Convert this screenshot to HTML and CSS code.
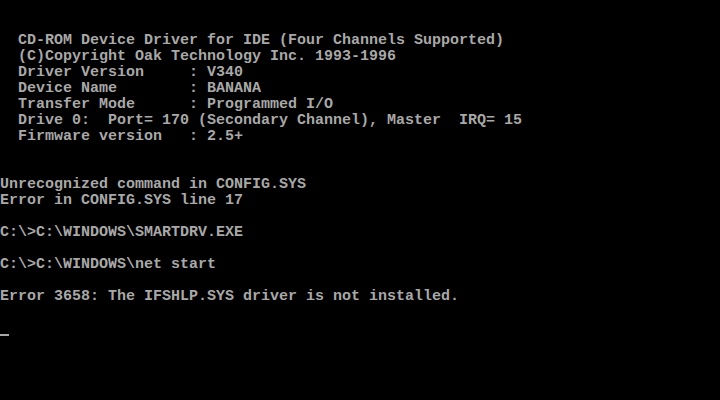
FILE: index.html
```html
<!DOCTYPE html>
<html>
<head>
<meta charset="utf-8">
<link rel="stylesheet" href="styles.css">
</head>
<body>
<div class="screen">
<pre class="text">


  CD-ROM Device Driver for IDE (Four Channels Supported)
  (C)Copyright Oak Technology Inc. 1993-1996
  Driver Version     : V340
  Device Name        : BANANA
  Transfer Mode      : Programmed I/O
  Drive 0:  Port= 170 (Secondary Channel), Master  IRQ= 15
  Firmware version   : 2.5+


Unrecognized command in CONFIG.SYS
Error in CONFIG.SYS line 17

C:\>C:\WINDOWS\SMARTDRV.EXE

C:\>C:\WINDOWS\net start

Error 3658: The IFSHLP.SYS driver is not installed.
</pre>
<div class="row"><span class="cursor"></span></div>
</div>
</body>
</html>
```
FILE: styles.css
```css
html, body {
  margin: 0;
  padding: 0;
  background: #000;
}
.screen {
  width: 720px;
  height: 400px;
  padding-top: 1px;
  box-sizing: border-box;
  background: #000;
  overflow: hidden;
}
.text {
  margin: 0 0 16px 0;
  font-family: "Liberation Mono", monospace;
  font-size: 15px;
  font-weight: bold;
  line-height: 16px;
  color: #a8a8a8;
  white-space: pre;
}
.row {
  height: 16px;
  display: flex;
  align-items: flex-end;
}
.cursor {
  display: block;
  width: 9px;
  height: 2px;
  margin-bottom: 1px;
  background: #a8a8a8;
}
```
